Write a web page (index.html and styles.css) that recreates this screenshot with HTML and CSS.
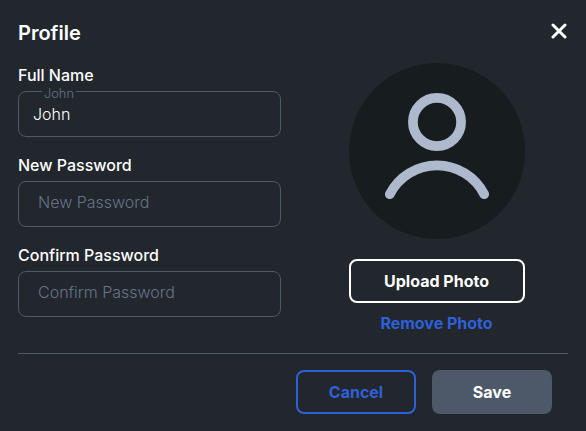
FILE: index.html
```html
<!DOCTYPE html>
<html lang="en">
<head>
    <meta charset="UTF-8">
    <meta name="viewport" content="width=device-width, initial-scale=1.0">
    <title>Profile</title>
    <link rel="stylesheet" href="styles.css">
</head>
<body>

    <form class="modal">
        <header class="modal-header">
            <h1>Profile</h1>
            <button type="button" class="close" aria-label="Close">
                <svg width="16" height="16" viewBox="0 0 16 16" fill="none" stroke="#fff" stroke-width="3" stroke-linecap="round">
                    <path d="M2 2L14 14M14 2L2 14"/>
                </svg>
            </button>
        </header>

        <div class="modal-body">
            <div class="fields">
                <div class="field">
                    <label for="fullName">Full Name</label>
                    <div class="input-box">
                        <span class="floating">John</span>
                        <input type="text" id="fullName" class="filled" value="John">
                    </div>
                </div>
                <div class="field">
                    <label for="newPassword">New Password</label>
                    <div class="input-box">
                        <input type="password" id="newPassword" placeholder="New Password">
                    </div>
                </div>
                <div class="field">
                    <label for="confirmPassword">Confirm Password</label>
                    <div class="input-box">
                        <input type="password" id="confirmPassword" placeholder="Confirm Password">
                    </div>
                </div>
            </div>

            <div class="photo">
                <div class="avatar">
                    <svg width="176" height="176" viewBox="0 0 176 176" fill="none" stroke="#afb9ce" stroke-width="9.7" stroke-linecap="round">
                        <circle cx="88" cy="59" r="24.1"/>
                        <path d="M40.8 131.2A53 53 0 0 1 135.2 131.2"/>
                    </svg>
                </div>
                <button type="button" class="btn btn-upload">Upload Photo</button>
                <button type="button" class="btn-remove">Remove Photo</button>
            </div>
        </div>

        <footer class="modal-footer">
            <button type="button" class="btn btn-cancel">Cancel</button>
            <button type="submit" class="btn btn-save">Save</button>
        </footer>
    </form>

</body>
</html>
```

FILE: styles.css
```css
* {
    margin: 0;
    padding: 0;
    box-sizing: border-box;
}

body {
    font-family: Inter, sans-serif;
    font-size: 16px;
    line-height: 24px;
    background-color: #22262d;
    color: #fff;
}

button, input {
    font: inherit;
    color: inherit;
    background: none;
    border: none;
    outline: none;
}

.modal {
    width: 586px;
    height: 431px;
    padding: 18px;
}

.modal-header {
    display: flex;
    justify-content: space-between;
    height: 45px;
}

.modal-header h1 {
    font-size: 20px;
    font-weight: 600;
    line-height: 30px;
}

.close {
    width: 16px;
    height: 16px;
    margin-top: 5px;
    margin-right: 1px;
}

.close svg, .avatar svg {
    display: block;
}

.modal-body {
    display: flex;
    justify-content: space-between;
    height: 290px;
}

.fields {
    display: flex;
    flex-direction: column;
    gap: 16px;
    width: 263px;
}

.field label {
    display: block;
    font-weight: 500;
    margin-bottom: 4px;
}

.input-box {
    position: relative;
    height: 46px;
    border: 1px solid #4d5a69;
    border-radius: 8px;
}

.input-box input {
    display: block;
    width: 100%;
    height: 44px;
    padding: 0 19px 4px;
    font-weight: 300;
}

.input-box input.filled {
    padding: 0 14px;
}

.input-box input::placeholder {
    color: #66748a;
    opacity: 1;
}

/* sits on the top border and cuts it */
.floating {
    position: absolute;
    top: -7px;
    left: 23px;
    padding: 0 2px;
    font-size: 12.8px;
    font-weight: 300;
    line-height: 17px;
    color: #66748a;
    background-color: #22262d;
}

.photo {
    display: flex;
    flex-direction: column;
    align-items: center;
    width: 176px;
    margin-right: 43px;
}

.avatar {
    width: 176px;
    height: 176px;
    margin-bottom: 20px;
    border-radius: 50%;
    background-color: #171c1f;
}

.btn {
    width: 120px;
    height: 44px;
    border-radius: 8px;
    font-weight: 700;
}

.btn-upload {
    width: 176px;
    padding-right: 1px;
    border: 2px solid #fff;
}

.btn-remove {
    margin-top: 8px;
    padding-right: 1px;
    font-weight: 700;
    color: #2f60d8;
}

.modal-footer {
    display: flex;
    justify-content: flex-end;
    gap: 16px;
    padding: 16px 16px 0;
    border-top: 1px solid #4d5a69;
}

.btn-cancel {
    border: 2px solid #2f60d8;
    color: #2f60d8;
}

.btn-save {
    background-color: #4d5968;
}
```
